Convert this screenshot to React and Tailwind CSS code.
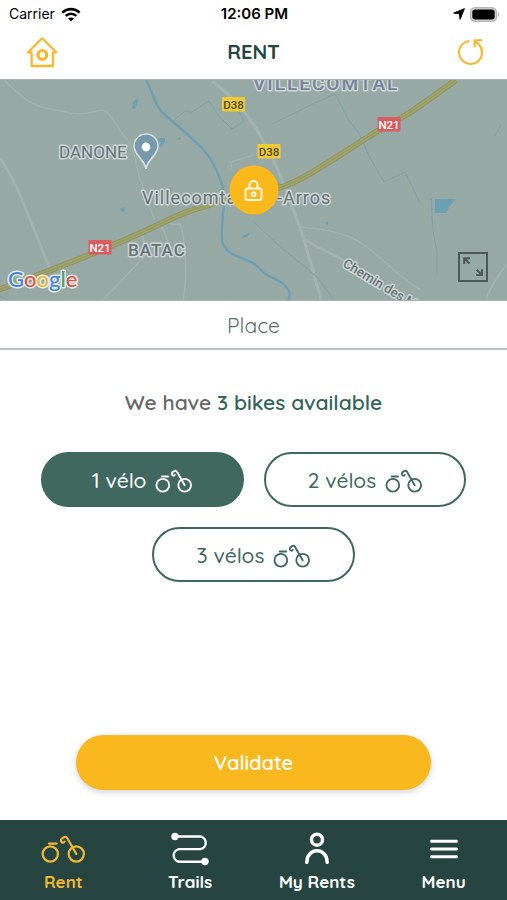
const FONT = "font-[Quicksand,Lato,sans-serif]";

function BikeIcon({ className }) {
  return (
    <svg viewBox="0 0 44 28" className={className} fill="none" stroke="currentColor" strokeWidth="2.2" strokeLinecap="round" strokeLinejoin="round" aria-hidden="true">
      <circle cx="9.3" cy="19" r="7.6" />
      <circle cx="35.3" cy="19" r="7.6" />
      <path d="M8 8.6h7.6" />
      <path d="M35.3 19 26 2.8C25.3 1.5 24 1.6 22.7 2.3 20.4 3.5 19.4 4.6 20.1 6.3c.6 1.7 2.8 1.9 3.4.3" />
    </svg>
  );
}

function StatusBar() {
  return (
    <div className="grid h-7 grid-cols-3 items-center pr-[7px] pl-[9px] font-[Inter,sans-serif] text-black">
      <div className="flex items-center gap-[6px]">
        <span className="text-sm">Carrier</span>
        <svg viewBox="0 0 20 15" className="h-[15px] w-5" fill="none" stroke="currentColor" strokeWidth="2.6" aria-label="Wi-Fi">
          <path d="M1.4 5.6C6.2 .9 13.8 .9 18.6 5.6" />
          <path d="M4.7 8.9c3-2.9 7.6-2.9 10.6 0" />
          <path d="M10 14.6 7 11.6c1.7-1.5 4.3-1.5 6 0z" fill="currentColor" stroke="none" />
        </svg>
      </div>
      <span className="text-center text-[15px] font-semibold">12:06 PM</span>
      <div className="flex items-center justify-end gap-1">
        <svg viewBox="0 0 12 12" className="h-3 w-3" fill="currentColor" stroke="currentColor" strokeWidth="1" strokeLinejoin="round" aria-label="Location">
          <path d="M11.4.7 7.1 11.3 6.4 5.8.7 5.1z" />
        </svg>
        <svg viewBox="0 0 31 15" className="h-[15px] w-[31px]" aria-label="Battery">
          <rect x="1.5" y=".8" width="26" height="13.4" rx="4.5" fill="#ddd" stroke="#b5b5b5" strokeWidth="1.4" />
          <rect x="3.3" y="2.6" width="22.4" height="9.8" rx="2.6" fill="#000" />
          <path d="M29 5.2c1.7.8 1.7 3.8 0 4.6z" fill="#b5b5b5" />
        </svg>
      </div>
    </div>
  );
}

function Header() {
  return (
    <header className="grid h-[51px] grid-cols-[1fr_auto_1fr] items-center px-[22px] pb-1">
      <button type="button" aria-label="Home" className="flex h-10 w-10 items-center justify-center text-[#f9b62b]">
        <svg viewBox="0 0 32 32" className="h-8 w-8" fill="none" stroke="currentColor" strokeWidth="2.3" strokeLinejoin="round" strokeLinecap="round">
          <path d="M16.2 2.2 2 16.3H5.6V30H27V16.3H30.4z" />
          <circle cx="16.3" cy="18.9" r="4.4" strokeWidth="3.2" />
        </svg>
      </button>
      <h1 className={`${FONT} text-xl font-bold text-[#244540]`}>RENT</h1>
      <button type="button" aria-label="Refresh" className="flex h-7 w-7 items-center justify-center justify-self-end text-[#f9b62b]">
        <svg viewBox="0 0 28 28" className="h-7 w-7" fill="none" stroke="currentColor" strokeWidth="2.1">
          <path d="M12 3A11.5 11.5 0 1 0 21.6 6.2L18 3" />
          <path d="M25 2.3H17.6V9.4" />
        </svg>
      </button>
    </header>
  );
}

function RoadSign({ x, y, label, fill, color }) {
  return (
    <g>
      <rect x={x} y={y} width="23" height="14.5" rx="1" fill={fill} />
      <text x={x + 11.5} y={y + 11.5} textAnchor="middle" fontSize="11.5" fontWeight="500" fill={color} className="font-[Roboto,sans-serif]">{label}</text>
    </g>
  );
}

function MapView() {
  return (
    <section aria-label="Map" className="relative h-[222px] overflow-hidden border-y border-[#a9b3b0] bg-[#97a9a4]">
      <svg viewBox="0 79 507 220" preserveAspectRatio="xMidYMid slice" className="h-full w-full" fill="none">
        <g stroke="#a3b3af" strokeWidth="1.2">
          <path d="M5 80C22 96 30 104 46 107S76 115 88 112 104 108 108 112C118 123 118 130 128 139 138 155 136 170 141 181S150 210 155 219" />
          <path d="M0 157C16 180 25 207 36 233L49 266" strokeWidth="2.6" />
          <path d="M212 80C232 95 249 115 260 134S277 165 286 189L304 238 322 302" strokeWidth="3.2" />
          <path d="M304 238C325 252 345 256 365 276" strokeWidth="2.6" />
          <path d="M300 226C340 229 355 236 372 250S404 280 421 289" />
          <path d="M161 223l8 20M170 223h10c5 12 8 50 3 77M142 232l4 22-44 46M507 263c-10 12-16 22-22 38" strokeWidth="1.6" />
          <path d="M254 154l-23 7 1 8" />
        </g>
        <g stroke="#7f9fa8" strokeWidth="1">
          <path d="M173 120l12-10 7 1 17-11 10 15 13 13 12-8-8-14M272 123l43-21 20-9 4 7 10 20 10 12 10 23 15 26 21-10 15 31M431 197l2 33 4 20v22M501 124l-6 11M253 220l24 23 40 33 18 24M0 295l10 5h90" />
        </g>
        <path d="M146 79C154 93 154 105 166 115S193 138 202 147 223 180 224 194 219 233 223 243C231 260 247 252 263 271 272 279 283 278 289 290c2 4 0 7-2 12" stroke="#6b9fb4" strokeWidth="2.4" />
        <g fill="#6b9fb4">
          <path d="M435 198h21l-6 7-4 7h-11z" />
          <path d="M133 101l4-4 1 3-3 8-3-1zM159 137h6v4l-4 5-2-1 2-4-3-1zM177 138l4-2-1 3zM243 235l7-4-2 4-5 2zM120 208l4-2 1 4-3 1zM325 222l3-2v4z" />
        </g>
        <path d="M-2 289C55 268 110 247 160 223 190 207 225 199 282 186C305 178 330 160 376 131 410 114 430 97 456 79" stroke="#8c9462" strokeWidth="6" />
        <path d="M-2 289C55 268 110 247 160 223 190 207 225 199 282 186C305 178 330 160 376 131 410 114 430 97 456 79" stroke="#a0a268" strokeWidth="4.4" />
        <path d="M-2 289C55 268 110 247 160 223 190 207 225 199 282 186C305 178 330 160 376 131 410 114 430 97 456 79" stroke="#969a60" strokeWidth="1" />

        <g className="font-[Roboto,sans-serif]" fill="#66737a" stroke="#ccd5d3" strokeWidth="3" strokeLinejoin="round" paintOrder="stroke">
          <text x="59" y="157" fontSize="17">DANONE</text>
          <text x="142" y="203" fontSize="18" letterSpacing="1">Villecomtal-sur-Arros</text>
          <text x="128" y="255" fontSize="17" fontWeight="500" letterSpacing="1">BATAC</text>
          <text x="253" y="89" fontSize="19" fontWeight="500" letterSpacing="2" fill="#75839c">VILLECOMTAL</text>
          <text x="342" y="265" fontSize="13" fontWeight="500" transform="rotate(31 342 265)">Chemin des Mo</text>
        </g>
        <RoadSign x={222} y={96} label="D38" fill="#efcb38" color="#53491f" />
        <RoadSign x={257.5} y={143} label="D38" fill="#efcb38" color="#53491f" />
        <RoadSign x={88.5} y={239} label="N21" fill="#d95c60" color="#fff" />
        <RoadSign x={377.5} y={116} label="N21" fill="#d95c60" color="#fff" />
        <path d="M146 168c-1-9-12-14-12-23a12 12 0 0 1 24 0c0 9-11 14-12 23z" fill="#7799ad" stroke="#d5dfe0" strokeWidth="1.6" />
        <circle cx="146" cy="146" r="4.4" fill="#fff" />
        <g fontSize="22" fontWeight="500" stroke="#e7edeb" strokeWidth="3" strokeLinejoin="round" paintOrder="stroke" className="font-[Lato,sans-serif]">
          <text x="8" y="286">
            <tspan fill="#4285e8">G</tspan><tspan fill="#e05346">o</tspan><tspan fill="#edba38">o</tspan><tspan fill="#4285e8">g</tspan><tspan fill="#45a662">l</tspan><tspan fill="#e05346">e</tspan>
          </text>
        </g>
      </svg>
      <button type="button" aria-label="Bike station" className="absolute top-1/2 left-1/2 flex h-[49px] w-[49px] -translate-x-1/2 -translate-y-1/2 items-center justify-center rounded-full bg-[#fbb81b] text-[#fff8df]">
        <svg viewBox="0 0 20 22" className="h-[22px] w-5" fill="none" stroke="currentColor" strokeWidth="2">
          <rect x="2" y="9" width="16" height="11.5" rx="2" />
          <path d="M6 9V5.5a4 4 0 0 1 8 0V9" />
          <circle cx="10" cy="14.7" r="2" strokeWidth="2" />
        </svg>
      </button>
      <button type="button" aria-label="Expand map" className="absolute right-[19px] bottom-[18px] text-[#4e5856]">
        <svg viewBox="0 0 30 30" className="block h-[30px] w-[30px]" fill="none" stroke="currentColor" strokeWidth="2">
          <rect x="1" y="1" width="28" height="28" />
          <path d="M6.2 12V6.2H12M6.5 6.5l5 5M24 17.2V23H18.2M23.7 22.7l-5-5" />
        </svg>
      </button>
    </section>
  );
}

const OPTIONS = ["1 vélo", "2 vélos", "3 vélos"];

function BikeOption({ label, selected }) {
  return (
    <button
      type="button"
      aria-pressed={selected}
      className={`${FONT} flex h-[55px] w-2/5 items-center justify-center gap-[9px] rounded-full border-2 border-[#3f6860] pt-[2px] text-[21px] font-medium ${selected ? "bg-[#40685f] text-white" : "bg-white text-[#40685f]"}`}
    >
      {label}
      <BikeIcon className="h-6 w-[37px]" />
    </button>
  );
}

function TrailsIcon() {
  return (
    <svg viewBox="0 0 38 34" className="h-[34px] w-[38px]" fill="none" stroke="currentColor" strokeWidth="2.4" aria-hidden="true">
      <path d="M4 4.5h25.5a6.4 6.4 0 0 1 0 12.6H8a6.4 6.4 0 0 0 0 12.6h26" />
      <circle cx="4" cy="4.5" r="3.7" fill="currentColor" stroke="none" />
      <circle cx="34" cy="29.5" r="3.7" fill="currentColor" stroke="none" />
    </svg>
  );
}

function PersonIcon() {
  return (
    <svg viewBox="0 0 26 34" className="h-[34px] w-[26px]" fill="none" stroke="currentColor" strokeWidth="3.4" strokeLinecap="round" aria-hidden="true">
      <circle cx="13" cy="7.7" r="5.5" />
      <path d="M2.8 30.4c0-15.5 20.4-15.5 20.4 0" />
    </svg>
  );
}

function MenuIcon() {
  return (
    <svg viewBox="0 0 28 34" className="h-[34px] w-7" stroke="currentColor" strokeWidth="3" strokeLinecap="round" aria-hidden="true">
      <path d="M1.5 9.3h25M1.5 17h25M1.5 24.7h25" />
    </svg>
  );
}

function NavItem({ label, active, children }) {
  return (
    <a href="#" aria-current={active ? "page" : undefined} className={`flex flex-col items-center gap-1 pt-3 ${active ? "text-[#f2b72b]" : "text-white"}`}>
      <span className="flex h-[34px] items-center">{children}</span>
      <span className="text-[17px] leading-6 font-bold">{label}</span>
    </a>
  );
}

export default function App() {
  return (
    <div className="flex min-h-screen flex-col bg-white">
      <StatusBar />
      <Header />
      <MapView />
      <p className={`${FONT} flex h-[49px] items-center justify-center border-b-2 border-[#b9c0be] pt-[2px] text-[21px] text-[#56716b]`}>Place</p>
      <main className={`${FONT} flex flex-1 flex-col items-center pt-[38px] pb-[30px]`}>
        <p className="text-[21px] leading-7 font-semibold text-[#666]">
          We have <strong className="font-semibold text-[#33645a]">3 bikes available</strong>
        </p>
        <div className="mt-9 flex w-full flex-wrap justify-center gap-5">
          {OPTIONS.map((label, index) => (
            <BikeOption key={label} label={label} selected={index === 0} />
          ))}
        </div>
        <button type="button" className="mt-auto h-[55px] w-[70%] rounded-full bg-[#f9b81e] text-xl font-semibold text-white shadow-[0_2px_6px_rgba(60,70,100,0.25)]">
          Validate
        </button>
      </main>
      <nav className={`${FONT} grid h-20 grid-cols-4 bg-[#264540]`}>
        <NavItem label="Rent" active>
          <BikeIcon className="h-7 w-11" />
        </NavItem>
        <NavItem label="Trails"><TrailsIcon /></NavItem>
        <NavItem label="My Rents"><PersonIcon /></NavItem>
        <NavItem label="Menu"><MenuIcon /></NavItem>
      </nav>
    </div>
  );
}
